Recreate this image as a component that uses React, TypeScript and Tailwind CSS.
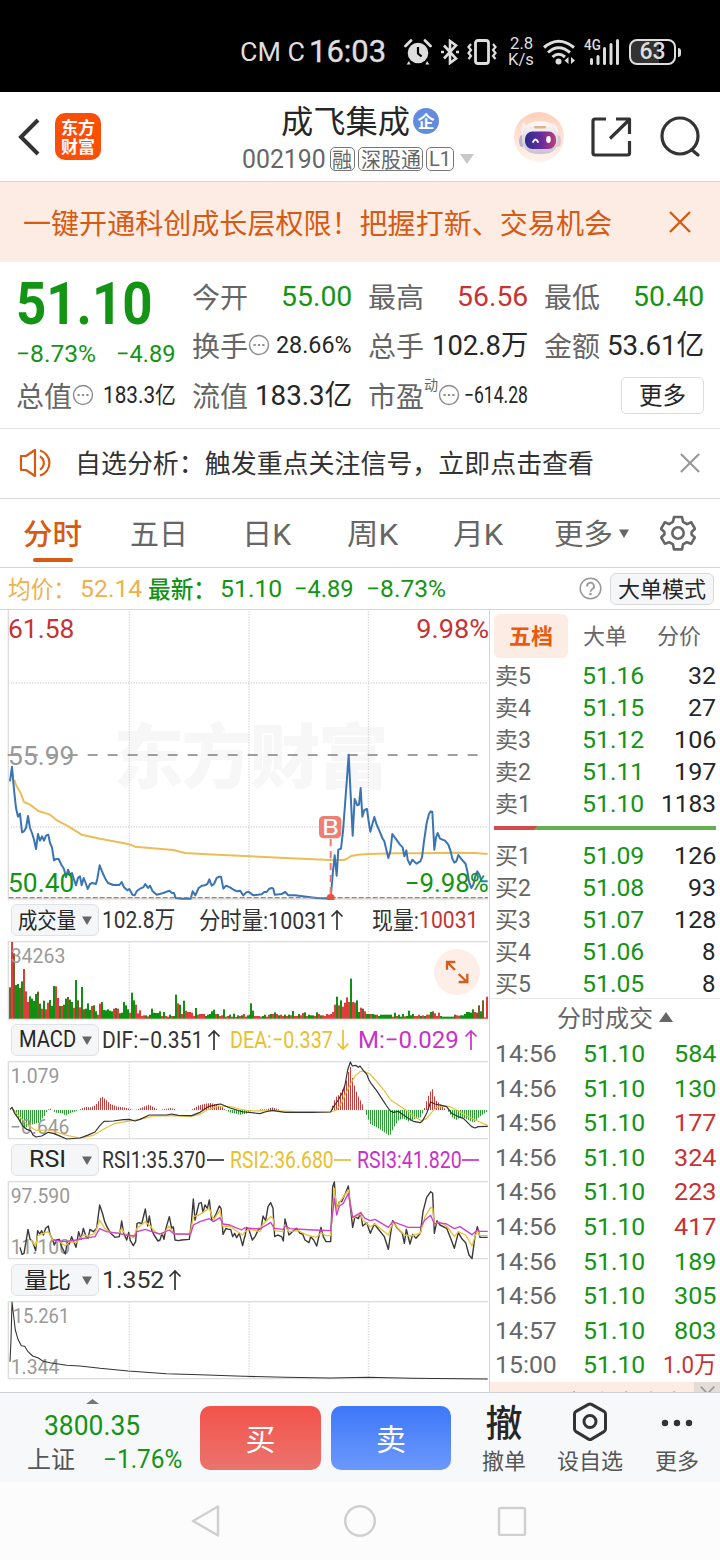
import { useLayoutEffect, useRef, useState, type ReactNode } from "react";

const GREEN = "text-[#149414]";
const RED = "text-[#c83232]";

/** Single-line text condensed or expanded to a fixed advance width; Chinese labels sit slightly lower. */
function Fit({ w, className = "", children }: { w: number; className?: string; children: ReactNode }) {
  const ref = useRef<HTMLSpanElement>(null);
  const [scale, setScale] = useState(1);
  useLayoutEffect(() => {
    if (ref.current) setScale(w / ref.current.offsetWidth);
  }, [w]);
  const dy = /^[\u4e00-\u9fff]/.test(String(children)) ? "0.055em" : "0";
  return (
    <span className={`block shrink-0 ${className}`} style={{ width: w }}>
      <span
        ref={ref}
        className="inline-block origin-left whitespace-nowrap align-top"
        style={{ transform: `translateY(${dy}) scaleX(${scale})` }}
      >
        {children}
      </span>
    </span>
  );
}

/* ---------- chart helpers: coordinates are thirds of a pixel ---------- */

const HALF = 735;

function points(morning: string, afternoon: string) {
  const parse = (s: string, dx: number) =>
    s
      .trim()
      .split(/\s+/)
      .map((p) => {
        const [x, y] = p.split(",").map(Number);
        return [x + dx, y] as [number, number];
      });
  return [...parse(morning, 0), ...parse(afternoon, HALF)];
}

function Line({ a, b, color, width = 3.6 }: { a: string; b: string; color: string; width?: number }) {
  return (
    <polyline
      points={points(a, b).map((p) => p.join(",")).join(" ")}
      fill="none"
      stroke={color}
      strokeWidth={width}
      strokeLinejoin="round"
    />
  );
}

function Frame({ top, bottom }: { top: number; bottom: number }) {
  return (
    <g fill="none">
      {[388, 747, 1105].map((x) => (
        <path key={x} d={`M${x} ${top}V${bottom}`} stroke="#cfcfcf" strokeWidth="3" strokeDasharray="4 4" />
      ))}
      <path d={`M1464 ${top}H25V${bottom}H1464`} stroke="#dcdcdc" strokeWidth="4" />
    </g>
  );
}

function ChartLabel({ x, y, w, size = 66, fill = "#999", children }: { x: number; y: number; w: number; size?: number; fill?: string; children: string }) {
  return (
    <text x={x} y={y} textLength={w} lengthAdjust="spacingAndGlyphs" fontSize={size} fill={fill}>
      {children}
    </text>
  );
}

const PRICE_A =
  "30,520 36,476 42,545 48,600 54,626 60,617 66,673 72,670 78,660 84,624 90,660 96,675 102,695 108,723 114,678 120,698 126,685 132,698 138,683 145,680 150,705 156,718 162,757 168,753 176,753 184,770 192,783 198,808 204,785 210,800 216,795 222,815 228,832 234,810 240,805 245,832 251,810 257,825 263,843 270,828 276,825 288,828 292,812 299,772 308,795 316,812 324,825 340,831 358,831 365,822 372,838 382,847 388,843 398,861 404,862 410,850 420,842 430,838 436,828 444,840 450,833 458,850 470,860 490,855 508,848 516,855 522,855 527,870 545,872 572,872 578,850 586,862 596,840 606,833 614,832 622,828 628,814 635,833 642,828 650,810 658,806 663,806 670,842 678,833 690,838 702,846 712,850 720,848 730,862 738,854";
const PRICE_B =
  "10,851 25,862 50,859 58,852 65,852 73,842 80,840 85,842 89,860 110,858 121,852 130,862 150,862 185,866 215,870 257,872 263,800 269,742 275,803 280,725 288,722 294,670 300,590 306,510 311,440 317,560 323,683 329,573 337,592 342,590 347,540 352,626 358,606 366,603 371,640 376,671 388,627 395,650 403,668 412,690 418,700 424,725 430,750 436,730 442,678 452,692 465,710 473,718 478,745 484,727 488,755 495,770 502,755 514,767 526,760 531,748 537,700 545,645 552,618 557,610 562,612 568,725 573,688 578,675 585,692 600,698 610,710 617,730 622,752 628,764 634,760 640,741 648,752 662,768 667,790 672,820 679,840 685,830 692,800 697,790 703,800 710,820 728,820";
const AVG_A =
  "42,515 50,535 62,555 72,582 90,590 115,609 150,620 172,638 200,652 245,680 300,692 385,708 405,716 520,726 555,735 620,739 735,744";
const AVG_B = "0,744 120,750 257,756 296,756 305,753 318,744 340,740 370,738 450,736 530,736 620,734 690,735 728,738";

function PriceChart() {
  return (
    <svg className="block" width="489" height="290" viewBox="0 6 1467 870" fontFamily="Roboto, 'Noto Sans CJK SC', sans-serif">
      <text x="340" y="524" textLength="826" fontSize="212" fontWeight="900" fill="#f7f7f7" fontFamily="'Noto Sans CJK SC'">
        东方财富
      </text>
      {[225, 657].map((y) => (
        <path key={y} d={`M24 ${y}H1464`} stroke="#d9d9d9" strokeWidth="4" strokeDasharray="4 4" />
      ))}
      <Frame top={2} bottom={873} />
      <path d="M23 441H1440" stroke="#808080" strokeWidth="5" strokeDasharray="30 30" />
      <Line a={AVG_A} b={AVG_B} color="#edbd55" width={6} />
      <Line a={PRICE_A} b={PRICE_B} color="#3b74b3" width={6} />
      <path d="M26 869H1464" stroke="#b07a68" strokeWidth="4" strokeDasharray="15 6" />
      <path d="M992 693V872" stroke="#ee7a70" strokeWidth="6" strokeDasharray="22 14" />
      <circle cx="992" cy="870" r="12" fill="#e8503f" />
      <rect x="957" y="624" width="67" height="67" rx="14" fill="#ee7f72" />
      <ChartLabel x={966} y={682} w={51} size={68} fill="#fff">B</ChartLabel>
      <ChartLabel x={24} y={90} w={199} size={78} fill="#c83232">61.58</ChartLabel>
      <ChartLabel x={24} y={471} w={199} size={78}>55.99</ChartLabel>
      <ChartLabel x={24} y={852} w={199} size={78} fill="#149414">50.40</ChartLabel>
      <ChartLabel x={1249} y={90} w={218} size={78} fill="#c83232">9.98%</ChartLabel>
      <ChartLabel x={1214} y={852} w={252} size={78} fill="#149414">−9.98%</ChartLabel>
    </svg>
  );
}

const VOL_A =
  "94m 230r 196m 101g 104g 92m 112g 149r 82r 50r 67g 60g 53g 74g 81m 45g 30r 54g 28r 48r 56g 38g 98g 97r 62r 38g 38r 42g 60g 65m 57g 50g 33r 116g 55m 34r 95g 28m 30g 46g 26g 38r 40g 22g 12r 45r 50g 26g 25g 28g 24g 22g 30r 32m 30r 16g 18g 50g 40g 28g 18r 78g 55g 42r 16r 25r 8r 10r 10g 7r 12g 30g 18g 17g 17g 22g 8r 20g 8r 6r 12g 8r 8g 72g 46r 42g 14r 54g 24r 20r 20r 18r 8r 32g 12r 14r 14r 14r 8g 12g 14g 22g 27g 14r 14g 8r 10r 28g 6r 8r 12g 6r 15g 5r 10g 8r 10g 14r 6r 10g 12g";
const VOL_B =
  "46g 24g 8r 8r 8r 6r 8g 12g 6r 12r 14g 14r 19g 14r 10g 12r 8r 12g 8r 12g 10r 23g 8r 8r 14g 10r 17r 19g 8r 12g 10g 10g 8r 19g 14r 10g 10r 8r 14r 12r 14r 20r 42r 66g 40r 55g 36r 48r 64r 50r 120g 50r 48r 55g 20g 33r 30m 22r 14g 14g 14r 14g 12g 12r 8g 12g 12g 12g 12g 12g 12g 6r 18g 8r 12g 6g 14g 7r 8g 24g 10g 14g 8r 8r 12r 8g 10r 8g 12r 12r 20g 22m 16r 8r 18r 8g 6g 6g 6g 6g 6g 6g 12m 10r 9r 10g 10g 14g 20g 20g 18g 28g 20r 18m 40m 22g 55m 4r 66r";
const VOL_COLORS: Record<string, string> = { r: "#e03c3c", g: "#109010", m: "#7d5a2c" };

function VolumeChart() {
  const bars = (s: string, x0: number) =>
    s.split(" ").map((t, i) => {
      const h = parseInt(t);
      return <rect key={x0 + i * 6} x={x0 + i * 6} y={356 - h} width="6" height={h} fill={VOL_COLORS[t.slice(-1)]} />;
    });
  return (
    <svg className="block" width="489" height="80" viewBox="0 120 1467 240" fontFamily="Roboto, sans-serif">
      <Frame top={125} bottom={357} />
      {bars(VOL_A, 27)}
      {bars(VOL_B, 750)}
      <ChartLabel x={32} y={189} w={164} size={62}>34263</ChartLabel>
      <circle cx="1371" cy="216" r="69" fill="#fdefe8" />
      <path d="M1341 209V186H1366M1343 188L1365 210M1376 222L1401 246M1402 221V246H1376" fill="none" stroke="#d06020" strokeWidth="7" />
    </svg>
  );
}

const HIST_A =
  "36,3 42,-8 60,-38 72,-55 90,-45 115,-38 132,-18 141,0 148,5 156,0 165,-8 185,-10 196,-17 210,-9 230,-3 240,3 255,9 270,8 285,14 295,28 303,42 315,32 330,18 350,10 370,8 385,4 400,0 412,2 430,10 445,16 460,8 475,0 500,4 512,6 530,0 560,-1 574,1 595,14 615,19 632,21 650,14 665,9 675,0 690,-8 720,-14 738,-11";
const HIST_B =
  "10,-5 25,0 65,2 80,8 95,3 105,0 255,0 262,15 270,38 280,45 290,60 300,75 308,110 314,135 320,100 330,62 340,38 350,20 357,0 365,-20 375,-42 390,-50 410,-62 433,-78 445,-52 460,-30 475,-25 490,-35 510,-25 525,-22 535,-2 540,18 550,45 560,66 570,30 580,22 590,10 603,0 610,-6 620,-22 632,-30 645,-22 660,-25 685,-38 700,-22 728,-2";

function MacdChart() {
  const env = points(HIST_A, HIST_B);
  const bars = [];
  for (let x = 36; x < 1462; x += 6) {
    const i = Math.max(1, env.findIndex((p) => p[0] >= x));
    const [x0, v0] = env[i - 1];
    const [x1, v1] = env[i];
    const v = v0 + ((v1 - v0) * (x - x0)) / (x1 - x0);
    if (Math.abs(v) > 0.8)
      bars.push(<path key={x} d={`M${x + 1.5} 630V${630 - v}`} stroke={v > 0 ? "#c43c3c" : "#2c9c34"} strokeWidth="3" />);
  }
  return (
    <svg className="block" width="489" height="80" viewBox="0 480 1467 240" fontFamily="Roboto, sans-serif">
      <Frame top={485} bottom={716} />
      <path d="M26 630H1464" stroke="#e3d9d9" strokeWidth="2" strokeDasharray="4 4" />
      {bars}
      <ChartLabel x={32} y={549} w={146} size={62}>1.079</ChartLabel>
      <ChartLabel x={30} y={702} w={178} size={62}>−0.646</ChartLabel>
      <Line
        a="36,626 50,640 70,662 90,680 108,691 150,690 200,706 240,714 280,706 310,688 345,670 400,661 430,656 460,648 520,647 570,650 600,643 625,628 655,618 690,620 720,627 738,631"
        b="15,633 80,632 150,635 255,636 275,630 290,608 300,585 318,550 330,528 345,515 357,513 375,522 400,550 420,575 437,600 460,615 490,635 510,652 530,662 545,655 560,637 575,622 600,618 615,620 640,632 660,645 690,660 728,676"
        color="#e8c040"
      />
      <Line
        a="30,628 36,622 44,640 55,655 68,678 80,688 92,692 100,706 108,711 125,708 145,697 160,700 175,706 200,717 240,714 262,706 285,696 300,676 312,664 340,663 370,659 388,658 405,663 420,658 448,645 500,645 515,642 535,646 575,647 600,637 625,620 650,614 662,612 690,624 730,636"
        b="0,636 45,641 60,636 82,631 100,634 120,637 200,637 257,636 264,622 280,600 293,576 300,555 308,510 316,486 322,498 332,496 340,502 345,498 355,512 365,522 372,540 378,550 395,572 410,595 425,618 436,633 445,637 460,634 475,645 490,655 505,664 525,668 533,662 545,640 557,606 570,612 590,616 605,620 620,640 640,650 655,655 668,668 680,680 690,684 700,680 728,679"
        color="#333"
      />
    </svg>
  );
}

function RsiChart() {
  return (
    <svg className="block" width="489" height="80" viewBox="0 120 1467 240" fontFamily="Roboto, sans-serif">
      <Frame top={125} bottom={356} />
      <ChartLabel x={32} y={189} w={178} size={62}>97.590</ChartLabel>
      <ChartLabel x={32} y={342} w={178} size={62}>11.100</ChartLabel>
      <Line
        width={4.2}
        a="60,322 66,343 72,340 78,305 84,268 90,297 98,305 107,332 113,272 119,282 125,272 130,285 137,265 145,258 150,283 157,297 163,315 170,300 178,298 184,318 196,342 202,305 208,312 215,290 228,322 236,275 243,298 250,265 258,290 264,295 270,268 280,275 290,265 299,195 308,222 314,245 322,262 332,280 345,292 358,290 365,243 371,280 380,300 386,277 391,302 400,317 407,305 411,250 418,248 425,252 436,207 443,258 448,228 455,270 462,285 474,303 480,300 486,280 492,298 497,268 508,230 515,265 520,260 525,300 535,302 545,300 568,298 574,250 580,177 585,240 597,190 604,188 609,218 615,195 622,205 628,180 635,240 640,238 648,222 658,198 663,205 669,283 678,265 685,268 692,268 698,290 704,280 710,293 718,280 728,317 734,290"
        b="0,290 5,262 12,270 22,300 30,290 42,265 48,268 54,228 62,242 69,200 77,188 84,205 89,290 98,285 110,290 115,303 120,237 132,285 142,275 155,265 165,280 173,282 180,300 192,308 197,290 206,300 215,318 228,262 235,290 243,305 257,305 263,140 268,126 273,195 278,200 283,185 290,185 302,158 310,138 316,200 323,262 330,230 340,236 347,218 353,258 365,248 376,280 388,252 402,270 418,290 430,328 437,280 443,242 455,262 472,280 478,310 484,268 495,312 503,283 513,295 526,280 534,215 545,172 557,155 563,160 568,280 576,242 585,255 605,265 617,295 628,325 640,278 652,298 662,308 672,345 681,356 690,290 697,260 705,292 728,292"
        color="#3a3a3a"
      />
      <Line
        width={4}
        a="92,300 107,318 113,288 125,282 145,275 158,300 178,305 196,318 208,305 228,308 250,285 265,288 285,280 299,240 314,265 332,278 358,280 365,265 375,282 400,293 411,265 436,245 448,255 470,280 490,282 508,258 522,282 570,284 580,230 597,225 612,215 628,205 640,240 660,212 669,260 690,258 705,270 728,285 734,276"
        b="0,275 15,268 45,275 52,255 77,230 84,235 90,272 113,275 120,255 130,275 160,272 185,285 215,292 228,278 243,287 257,287 268,145 275,208 283,187 310,150 323,235 347,222 353,240 376,260 390,252 430,285 443,247 478,285 495,288 526,280 540,230 557,202 563,205 568,255 580,245 605,258 628,290 640,275 662,285 681,318 690,290 697,272 705,286 728,287"
        color="#ecc238"
      />
      <Line
        width={4}
        a="160,300 196,305 228,300 240,297 285,290 299,266 320,275 358,280 375,285 405,288 411,275 436,268 455,275 480,282 508,270 522,282 572,282 580,255 600,245 628,236 640,245 660,233 669,252 690,255 705,262 725,270 734,263"
        b="0,264 45,267 77,247 88,265 115,268 121,258 135,266 205,270 257,272 268,175 275,225 283,198 295,190 310,160 323,232 347,218 360,235 376,242 390,238 430,262 443,245 490,262 526,262 540,240 557,226 568,252 580,248 605,252 628,266 645,260 681,284 697,270 705,274 728,274"
        color="#cf3fcf"
      />
    </svg>
  );
}

function RatioChart() {
  return (
    <svg className="block" width="489" height="80" viewBox="0 480 1467 240" fontFamily="Roboto, sans-serif">
      <Frame top={485} bottom={716} />
      <ChartLabel x={38} y={549} w={170} size={62}>15.261</ChartLabel>
      <ChartLabel x={32} y={702} w={146} size={62}>1.344</ChartLabel>
      <Line
        a="30,665 33,600 36,486 40,520 46,570 54,598 64,617 74,619 84,635 98,648 115,654 130,664 150,668 200,676 240,678 300,685 385,693 500,701 600,704 730,709"
        b="0,709 120,712 257,714 370,712 500,715 728,717"
        color="#333"
        width={3.2}
      />
    </svg>
  );
}

/* ---------- icons ---------- */

function StatusIcons() {
  return (
    <>
      <svg className="ml-[18px]" width="28" height="28" viewBox="0 0 28 28" fill="#dedede">
        <circle cx="14" cy="15" r="10.3" />
        <path d="M5 23l-2.4 3.4 4 .2zM23 23l2.4 3.4-4 .2z" />
        <path d="M1.5 8L7 2.5M26.5 8L21 2.5" stroke="#dedede" strokeWidth="2.8" strokeLinecap="round" />
        <path d="M14 9v6.5l3.6 3" stroke="#000" strokeWidth="2.2" fill="none" />
      </svg>
      <svg className="ml-[9px]" width="18" height="26" viewBox="0 0 18 26" fill="none" stroke="#dedede" strokeWidth="2.6">
        <path d="M3 6.500l12 13-6 4.500V2l6 4.500L3 19.500" />
        <path d="M0 13h3M15 13h3" />
      </svg>
      <svg className="ml-[8px]" width="30" height="26" viewBox="0 0 30 26" fill="none" stroke="#dedede" strokeWidth="2.2">
        <rect x="8.500" y="1.500" width="13" height="23" rx="2.500" strokeWidth="2.800" />
        <path d="M4 5L1.500 8 4 11 1.500 14 4 17 1.500 20M26 5l2.500 3L26 11l2.500 3L26 17l2.500 3" />
      </svg>
      <div className="ml-[11px] flex w-[26px] flex-col items-center text-[#dedede]">
        <Fit w={23} className="text-[16px] leading-[16px]">2.8</Fit>
        <Fit w={26} className="text-[16px] leading-[16px]">K/s</Fit>
      </div>
      <svg className="ml-[9px]" width="33" height="26" viewBox="0 0 33 26" fill="none" stroke="#dedede" strokeWidth="3">
        <path d="M1 8.500Q15.500-4 31 8.500M5 13.500Q15.500 4 27 13.500M9.500 18Q15.500 12.500 22 18" />
        <circle cx="15.500" cy="22.500" r="3" fill="#dedede" stroke="none" />
        <path d="M25.500 18v7l-4-3.500zM28 18v7l4-3.500z" fill="#dedede" stroke="none" />
      </svg>
      <div className="relative ml-[8px] h-[26px] w-[36px]">
        <svg width="36" height="26" viewBox="0 0 36 26" fill="#dedede">
          <rect x="6" y="19" width="3" height="7" rx="1.500" />
          <rect x="12.500" y="16" width="3" height="10" rx="1.500" />
          <rect x="19" y="8" width="3" height="18" rx="1.500" />
          <rect x="25.500" y="4" width="3" height="22" rx="1.500" />
          <rect x="32" y="0" width="3" height="26" rx="1.500" />
        </svg>
        <div className="absolute left-0 top-0">
          <Fit w={17} className="text-[15px] font-medium leading-[13px] text-[#dedede]">4G</Fit>
        </div>
      </div>
      <div className="ml-[9px] flex h-[26px] w-[47px] items-center justify-center rounded-[8px] border-2 border-[#dedede] bg-[linear-gradient(90deg,#333_64%,#000_64%)]">
        <Fit w={26} className="text-[23px] font-medium leading-[22px] text-[#dedede]">63</Fit>
      </div>
      <div className="ml-[2px] h-[9px] w-[3px] rounded-r bg-[#dedede]" />
    </>
  );
}

function Robot() {
  return (
    <svg width="50" height="50" viewBox="0 0 50 50">
      <defs>
        <linearGradient id="halo" x1="0" y1="0" x2="0" y2="1">
          <stop offset="0" stopColor="#fdd0bb" />
          <stop offset="1" stopColor="#fff3ec" />
        </linearGradient>
        <linearGradient id="visor" x1="0" y1="0" x2="1" y2="0">
          <stop offset="0" stopColor="#2b2e90" />
          <stop offset=".55" stopColor="#6a2c9c" />
          <stop offset="1" stopColor="#c04078" />
        </linearGradient>
        <linearGradient id="shell" x1="0" y1="0" x2="0" y2="1">
          <stop offset="0" stopColor="#fffaf7" />
          <stop offset="1" stopColor="#c9c3d6" />
        </linearGradient>
      </defs>
      <circle cx="25" cy="25" r="25" fill="url(#halo)" />
      <path d="M9 10q-3 6-1 13l7-7zM40 11q6 5 3 13l-7-7z" fill="#f6f0ef" />
      <ellipse cx="8" cy="29" rx="3" ry="6" fill="#b9b3c4" />
      <ellipse cx="44" cy="29" rx="3" ry="6" fill="#d9c8d0" />
      <path d="M8 27C8 14 15 9 26 9s18 5 18 18-8 15-18 15S8 39 8 27z" fill="url(#shell)" />
      <rect x="11" y="19.500" width="31" height="17.500" rx="7.500" fill="url(#visor)" />
      <path d="M19 30q2.500-5 5 0" fill="none" stroke="#fff" strokeWidth="1.800" strokeLinecap="round" />
      <ellipse cx="34.500" cy="27.500" rx="2.300" ry="3.400" fill="#fff" />
      <rect x="20" y="14" width="12" height="2.600" rx="1.300" fill="#d9b48c" />
    </svg>
  );
}

function Dots() {
  return (
    <svg className="-mt-[2px] shrink-0" width="22" height="22" viewBox="0 0 22 22" fill="none" stroke="#8c8c8c" strokeWidth="1.400">
      <circle cx="11" cy="11" r="9.500" />
      <path d="M5.500 11h2.200M9.900 11h2.200M14.300 11h2.200" strokeWidth="2" />
    </svg>
  );
}

function Cross({ className }: { className: string }) {
  return (
    <svg className={className} width="22" height="22" viewBox="0 0 22 22" fill="none" strokeWidth="2.400">
      <path d="M1 1l20 20M21 1L1 21" />
    </svg>
  );
}

function Down({ className = "" }: { className?: string }) {
  return (
    <svg className={`shrink-0 ${className}`} width="10" height="9" viewBox="0 0 10 9" fill="#666">
      <path d="M0 .5h10L5 9z" />
    </svg>
  );
}

/* ---------- blocks ---------- */

function Badge({ w, box, children }: { w: number; box: string; children: string }) {
  return (
    <div className={`mt-[2px] flex h-[24px] items-center justify-center rounded-[5px] border border-[#777] ${box}`}>
      <Fit w={w} className="text-[21px] leading-[20px] text-[#666]">{children}</Fit>
    </div>
  );
}

function Quote({ label, value, w, color = "text-[#262626]", dots = false, sup, small = false }: { label: string; value: string; w: number; color?: string; dots?: boolean; sup?: string; small?: boolean }) {
  return (
    <div className="flex h-[49.5px] items-center">
      <Fit w={56} className="text-[28px] leading-[40px] text-[#666]">{label}</Fit>
      {sup && <Fit w={14} className="-mt-[24px] text-[14px] leading-[16px] text-[#666]">{sup}</Fit>}
      {dots && <Dots />}
      <Fit w={w} className={`ml-auto ${small ? "text-[23px]" : "text-[28px]"} leading-[40px] ${color}`}>{value}</Fit>
    </div>
  );
}

function Pill({ w, cjk = false, children }: { w: number; cjk?: boolean; children: string }) {
  return (
    <div className="ml-[11px] flex h-[32px] w-[88px] shrink-0 items-center rounded-[6px] border border-[#dfe2e6] bg-[#f5f6f8] pr-[6px]">
      <div className="flex flex-1 justify-center">
        <Fit w={w} className={`${cjk ? "text-[22px]" : "text-[23px]"} leading-[30px] text-[#262626]`}>{children}</Fit>
      </div>
      <Down />
    </div>
  );
}

function Arrow({ kind, className }: { kind: "up" | "down" | "flat"; className: string }) {
  const d = kind === "up" ? "M7 21V2M1.500 7.500L7 2l5.500 5.500" : kind === "down" ? "M7 1v19M1.500 14.500L7 20l5.500-5.500" : "M0 11h17";
  const w = kind === "flat" ? 17 : 14;
  return (
    <svg className={`shrink-0 ${className}`} width={w} height="22" viewBox={`0 0 ${w} 22`} fill="none" stroke="currentColor" strokeWidth="1.700">
      <path d={d} />
    </svg>
  );
}

function Level({ name, price, vol, w }: { name: string; price: string; vol: string; w: number }) {
  return (
    <div className="flex h-[32px] shrink-0 items-center pl-[5px] pr-[4px] text-[24px] leading-[32px]">
      <Fit w={36} className="text-[23px] text-[#666]">{name}</Fit>
      <Fit w={62} className={`ml-[51px] ${GREEN}`}>{price}</Fit>
      <Fit w={w} className="ml-auto text-[#262626]">{vol}</Fit>
    </div>
  );
}

const SELLS: [string, string, string, number][] = [
  ["卖5", "51.16", "32", 28],
  ["卖4", "51.15", "27", 28],
  ["卖3", "51.12", "106", 42],
  ["卖2", "51.11", "197", 42],
  ["卖1", "51.10", "1183", 55],
];
const BUYS: [string, string, string, number][] = [
  ["买1", "51.09", "126", 42],
  ["买2", "51.08", "93", 28],
  ["买3", "51.07", "128", 42],
  ["买4", "51.06", "8", 14],
  ["买5", "51.05", "8", 14],
];
const TICKS: [string, string, boolean][] = [
  ["14:56", "584", false],
  ["14:56", "130", false],
  ["14:56", "177", true],
  ["14:56", "324", true],
  ["14:56", "223", true],
  ["14:56", "417", true],
  ["14:56", "189", false],
  ["14:56", "305", false],
  ["14:57", "803", false],
  ["15:00", "1.0万", true],
];

export default function App() {
  return (
    <div className="flex h-[1560px] w-[720px] flex-col overflow-hidden bg-white font-[Roboto,'Noto_Sans_CJK_SC',sans-serif]">
      <div className="flex h-[92px] shrink-0 items-center bg-black pl-[240px] pt-[12px]">
        <Fit w={65} className="text-[26px] leading-[36px] text-[#dedede]">CM C</Fit>
        <Fit w={77} className="ml-[4px] text-[31px] leading-[36px] text-[#dedede] [-webkit-text-stroke:0.4px_#dedede]">16:03</Fit>
        <StatusIcons />
      </div>

      <header className="flex h-[90px] shrink-0 items-center border-b border-[#d6d6d6]">
        <svg className="ml-[17px] shrink-0" width="24" height="38" viewBox="0 0 24 38" fill="none" stroke="#333" strokeWidth="4">
          <path d="M21 2L4 19l17 17" />
        </svg>
        <div className="ml-[14px] flex h-[47px] w-[46px] shrink-0 flex-col items-center justify-center rounded-[10px] bg-[#fb4f08] text-[17px] font-bold leading-[19px] text-white">
          <Fit w={34}>东方</Fit>
          <Fit w={34}>财富</Fit>
        </div>
        <div className="ml-[141px] flex w-[232px] shrink-0 flex-col">
          <div className="flex h-[42px] items-center pl-[39px]">
            <Fit w={129} className="text-[32px] leading-[42px] text-[#262626]">成飞集成</Fit>
            <div className="ml-[3px] mt-[2px] flex size-[26px] items-center justify-center rounded-full bg-[#628be0]">
              <Fit w={17} className="text-[17px] font-bold leading-[24px] text-white">企</Fit>
            </div>
          </div>
          <div className="flex h-[34px] items-center gap-[2.5px]">
            <Fit w={84} className="pt-[2px] text-[26px] leading-[34px] text-[#666]">002190</Fit>
            <Badge w={20} box="ml-[1px] w-[26px]">融</Badge>
            <Badge w={60} box="w-[66px]">深股通</Badge>
            <Badge w={22} box="w-[28px]">L1</Badge>
            <svg className="ml-[4px] mt-[2px]" width="14" height="10" viewBox="0 0 14 10" fill="#c8c8c8">
              <path d="M0 0h14L7 10z" />
            </svg>
          </div>
        </div>
        <div className="ml-[40px] shrink-0">
          <Robot />
        </div>
        <svg className="ml-[27px] shrink-0" width="42" height="40" viewBox="0 0 42 40" fill="none" stroke="#333" strokeWidth="3.200" strokeLinejoin="round">
          <path d="M15 2H4a2 2 0 0 0-2 2v32a2 2 0 0 0 2 2h32.500a2 2 0 0 0 2-2V24M25 2h13.500v15M38 3L19 21.500" />
        </svg>
        <svg className="ml-[27px] shrink-0" width="42" height="42" viewBox="0 0 42 42" fill="none" stroke="#333" strokeWidth="3.200" strokeLinecap="round">
          <circle cx="20" cy="20" r="18" />
          <path d="M32 34l6 5" />
        </svg>
      </header>

      <div className="flex h-[80px] shrink-0 items-center bg-[#fdece3] pl-[23px] pr-[29px]">
        <Fit w={589} className="pt-[1px] text-[28px] leading-[40px] text-[#d65a14]">一键开通科创成长层权限！把握打新、交易机会</Fit>
        <Cross className="ml-auto stroke-[#d65a14]" />
      </div>

      <section className="grid h-[167px] shrink-0 grid-cols-[160px_160px_160px_160px] gap-x-[16px] border-b border-[#e6e6e6] pl-[16px] pt-[10px]">
        <div>
          <div className="flex h-[64px] items-center">
            <Fit w={137} className={`text-[59px] font-bold leading-[64px] ${GREEN}`}>51.10</Fit>
          </div>
          <div className={`flex h-[35px] items-center justify-between pt-[2px] text-[24px] leading-[33px] ${GREEN}`}>
            <Fit w={80}>−8.73%</Fit>
            <Fit w={60}>−4.89</Fit>
          </div>
          <Quote label="总值" dots small value="183.3亿" w={73} />
        </div>
        <div>
          <Quote label="今开" value="55.00" w={71} color={GREEN} />
          <Quote label="换手" dots small value="28.66%" w={76} />
          <Quote label="流值" value="183.3亿" w={97} />
        </div>
        <div>
          <Quote label="最高" value="56.56" w={71} color={RED} />
          <Quote label="总手" value="102.8万" w={96} />
          <Quote label="市盈" sup="动" dots small value="−614.28" w={64} />
        </div>
        <div>
          <Quote label="最低" value="50.40" w={71} color={GREEN} />
          <Quote label="金额" value="53.61亿" w={97} />
          <div className="flex h-[49.5px] items-center justify-end">
            <div className="flex h-[37px] w-[83px] items-center justify-center rounded-[5px] border border-[#dcdcdc]">
              <Fit w={47} className="text-[24px] leading-[33px] text-[#262626]">更多</Fit>
            </div>
          </div>
        </div>
      </section>

      <div className="flex h-[70px] shrink-0 items-center border-b border-[#d6d6d6] pb-[2px] pl-[19px] pr-[20px]">
        <svg width="36" height="30" viewBox="0 0 36 30" fill="none" stroke="#d65a14" strokeWidth="2.200" strokeLinejoin="round">
          <path d="M2 8h5l9-6v26l-9-6H2z" />
          <path d="M21 8.500a7.500 7.500 0 0 1 0 13M21 2.500a13 13 0 0 1 0 25" />
        </svg>
        <Fit w={519} className="ml-[20px] text-[26px] leading-[40px] text-[#333]">自选分析：触发重点关注信号，立即点击查看</Fit>
        <Cross className="ml-auto size-[20px] stroke-[#999]" />
      </div>

      <nav className="flex h-[69px] shrink-0 items-center border-b border-[#d6d6d6] text-[29px] leading-[60px] text-[#666]">
        <div className="relative ml-[23px]">
          <Fit w={59} className="font-medium text-[#d65a14]">分时</Fit>
          <div className="absolute bottom-[1px] left-[10px] h-[4px] w-[40px] rounded-full bg-[#d65a14]" />
        </div>
        <Fit w={58} className="ml-[48px]">五日</Fit>
        <Fit w={49} className="ml-[54px]">日K</Fit>
        <Fit w={51} className="ml-[56px]">周K</Fit>
        <Fit w={50} className="ml-[55px]">月K</Fit>
        <Fit w={59} className="ml-[51px]">更多</Fit>
        <Down className="ml-[6px]" />
        <svg className="ml-[31px]" width="36" height="36" viewBox="0 0 36 36" fill="none" stroke="#666" strokeWidth="2.600" strokeLinejoin="round">
          <path d="M14 2h8l1 4.800 4 2.300 4.300-1.800L35 13.800 31.600 17v2.500l3.200 3-3.600 6.200-4.400-1.500-3.800 2.200-1 5h-8l-1-5-3.800-2.200-4.400 1.500-3.600-6.200 3.200-3V17L1 13.800l3.700-6.500L9 9.100l4-2.300z" />
          <circle cx="18" cy="18" r="5.700" />
        </svg>
      </nav>

      <div className={`flex h-[42px] shrink-0 items-center border-b border-[#d6d6d6] pl-[8px] text-[24px] leading-[40px] ${GREEN}`}>
        <Fit w={68} className="text-[#edb24e]">均价：</Fit>
        <Fit w={62} className="ml-[4px] text-[#edb24e]">52.14</Fit>
        <Fit w={68} className="ml-[6px] font-medium">最新：</Fit>
        <Fit w={62} className="ml-[4px]">51.10</Fit>
        <Fit w={60} className="ml-[12px]">−4.89</Fit>
        <Fit w={80} className="ml-[12px]">−8.73%</Fit>
        <svg className="ml-[133px] shrink-0" width="23" height="23" viewBox="0 0 23 23" fill="none" stroke="#999" strokeWidth="1.500">
          <circle cx="11.500" cy="11.500" r="10.300" />
          <path d="M8 9.500a3.500 3.500 0 1 1 5.200 2.800c-1.200.7-1.700 1.200-1.700 2.500" strokeWidth="1.800" />
          <circle cx="11.500" cy="17" r=".6" />
        </svg>
        <div className="ml-[8px] flex h-[32px] w-[104px] items-center justify-center rounded-[6px] border border-[#d8dadd] bg-[#f5f6f8]">
          <Fit w={88} className="text-[22px] leading-[30px] text-[#262626]">大单模式</Fit>
        </div>
      </div>

      <main className="flex h-[782px] shrink-0 overflow-hidden">
        <div className="w-[490px] shrink-0 border-r border-[#d0d5d8]">
          <PriceChart />
          <div className="flex h-[40px] items-center text-[24px] leading-[40px] text-[#333]">
            <Pill w={58} cjk>成交量</Pill>
            <Fit w={73} className="ml-[3px]">102.8万</Fit>
            <Fit w={129} className="ml-[24px]">分时量:10031</Fit>
            <Arrow kind="up" className="ml-[2px]" />
            <Fit w={47} className="ml-[28px]">现量:</Fit>
            <Fit w={59} className={RED}>10031</Fit>
          </div>
          <VolumeChart />
          <div className="flex h-[40px] items-center text-[24px] leading-[40px] text-[#333]">
            <Pill w={57}>MACD</Pill>
            <Fit w={101} className="ml-[3px]">DIF:−0.351</Fit>
            <Arrow kind="up" className="ml-[4px]" />
            <Fit w={103} className="ml-[9px] text-[#e8c030]">DEA:−0.337</Fit>
            <Arrow kind="down" className="ml-[3px] text-[#e8c030]" />
            <Fit w={101} className="ml-[8px] text-[#c832c8]">M:−0.029</Fit>
            <Arrow kind="up" className="ml-[5px] text-[#c832c8]" />
          </div>
          <MacdChart />
          <div className="flex h-[40px] items-center text-[24px] leading-[40px] text-[#333]">
            <Pill w={37}>RSI</Pill>
            <Fit w={104} className="ml-[3px]">RSI1:35.370</Fit>
            <Arrow kind="flat" className="ml-[1px]" />
            <Fit w={104} className="ml-[6px] text-[#e8c030]">RSI2:36.680</Fit>
            <Arrow kind="flat" className="text-[#e8c030]" />
            <Fit w={105} className="ml-[6px] text-[#c832c8]">RSI3:41.820</Fit>
            <Arrow kind="flat" className="text-[#c832c8]" />
          </div>
          <RsiChart />
          <div className="flex h-[40px] items-center text-[24px] leading-[40px] text-[#333]">
            <Pill w={47} cjk>量比</Pill>
            <Fit w={62} className="ml-[3px]">1.352</Fit>
            <Arrow kind="up" className="ml-[4px]" />
          </div>
          <RatioChart />
          <div className="flex justify-between px-[9px] pt-[8px] text-[22px] leading-[28px] text-[#999]">
            <Fit w={60}>09:30</Fit>
            <Fit w={60}>15:00</Fit>
          </div>
        </div>

        <div className="flex w-[230px] flex-col">
          <div className="flex h-[48px] shrink-0 items-center pl-[4px] pt-[4px] text-[22px] leading-[44px] text-[#666]">
            <div className="flex h-[44px] w-[74px] items-center justify-center rounded-[6px] bg-[#fdece3]">
              <Fit w={44} className="font-bold text-[#e85a10]">五档</Fit>
            </div>
            <Fit w={44} className="ml-[15px]">大单</Fit>
            <Fit w={44} className="ml-[30px]">分价</Fit>
          </div>
          <div className="mt-[2px]">
            {SELLS.map(([n, p, v, w]) => (
              <Level key={n} name={n} price={p} vol={v} w={w} />
            ))}
          </div>
          <div className="ml-[4px] mt-[6px] h-[4px] w-[222px] shrink-0 bg-[linear-gradient(135deg,#d24c4c_31px,#63b04e_31px)]" />
          <div className="mt-[10px] h-[158px] shrink-0">
            {BUYS.map(([n, p, v, w]) => (
              <Level key={n} name={n} price={p} vol={v} w={w} />
            ))}
          </div>
          <div className="flex h-[39px] shrink-0 items-center border-t border-[#e6e6e6] pb-[1px] pl-[67px]">
            <Fit w={96} className="text-[24px] leading-[38px] text-[#666]">分时成交</Fit>
            <svg className="-mt-[2px] ml-[6px]" width="14" height="10" viewBox="0 0 14 10" fill="#666">
              <path d="M0 10h14L7 0z" />
            </svg>
          </div>
          {TICKS.map(([t, v, red], i) => (
            <div key={i} className="flex h-[34.550px] shrink-0 items-center pl-[5px] pr-[4px] text-[24px] leading-[34px]">
              <Fit w={62} className="text-[#666]">{t}</Fit>
              <Fit w={62} className={`ml-[26px] ${GREEN}`}>51.10</Fit>
              <Fit w={v.length > 3 ? 53 : 42} className={`ml-auto ${red ? RED : GREEN}`}>{v}</Fit>
            </div>
          ))}
          <div className="flex h-[40px] shrink-0 justify-between overflow-hidden bg-[#fdece3] pl-[50px] text-[22px] text-[#d65a14]">
            <Fit w={145} className="pt-[6px] leading-[28px]">深市 主力资金</Fit>
            <div className="flex h-[24px] w-[26px] justify-center bg-[#e6dcd7] pt-[4px]">
              <Cross className="size-[15px] stroke-[#999]" />
            </div>
          </div>
        </div>
      </main>

      <footer className="flex h-[90px] shrink-0 border-t border-[#cdd1d5] bg-[#f6f8fa]">
        <div className="w-[200px] shrink-0">
          <svg className="ml-[86px] mt-[6px] block" width="13" height="5" viewBox="0 0 13 5" fill="#777">
            <path d="M0 5h13L6.500 0z" />
          </svg>
          <Fit w={96} className={`ml-[44px] mt-[5px] h-[33px] text-[27px] leading-[34px] ${GREEN}`}>3800.35</Fit>
          <div className="flex h-[34px] items-center">
            <Fit w={48} className="ml-[27px] text-[24px] leading-[34px] text-[#555]">上证</Fit>
            <Fit w={79} className={`ml-[28px] pt-[1px] text-[25px] leading-[34px] ${GREEN}`}>−1.76%</Fit>
          </div>
        </div>
        <div className="mt-[13px] flex h-[64px] w-[121px] shrink-0 items-center justify-center rounded-[10px] bg-linear-to-b from-[#f2524b] to-[#eb736c]">
          <Fit w={30} className="text-[30px] leading-[60px] text-white">买</Fit>
        </div>
        <div className="ml-[10px] mt-[13px] flex h-[64px] w-[120px] shrink-0 items-center justify-center rounded-[10px] bg-linear-to-b from-[#3d77f8] to-[#6c98fc]">
          <Fit w={30} className="text-[30px] leading-[60px] text-white">卖</Fit>
        </div>
        <div className="ml-[31px] flex w-[44px] flex-col items-center">
          <Fit w={37} className="mt-[8px] text-[37px] font-medium leading-[44px] text-[#262626]">撤</Fit>
          <Fit w={44} className="mt-[1px] text-[22px] leading-[30px] text-[#555]">撤单</Fit>
        </div>
        <div className="ml-[31px] flex w-[66px] flex-col items-center">
          <svg className="mt-[9px]" width="36" height="40" viewBox="0 0 36 40" fill="none" stroke="#333" strokeWidth="3" strokeLinejoin="round">
            <path d="M16.500 2.400a3 3 0 0 1 3 0l12.500 7a3 3 0 0 1 1.500 2.600v15a3 3 0 0 1-1.500 2.600l-12.500 7.500a3 3 0 0 1-3 0L4 29.600A3 3 0 0 1 2.500 27V12A3 3 0 0 1 4 9.400z" />
            <circle cx="18" cy="19.500" r="6" />
          </svg>
          <Fit w={66} className="mt-[4px] text-[22px] leading-[30px] text-[#555]">设自选</Fit>
        </div>
        <div className="ml-[32px] flex w-[44px] flex-col items-center">
          <svg className="mt-[26px]" width="32" height="8" viewBox="0 0 32 8" fill="#333">
            <circle cx="4" cy="4" r="3.200" />
            <circle cx="16" cy="4" r="3.200" />
            <circle cx="28" cy="4" r="3.200" />
          </svg>
          <Fit w={44} className="mt-[19px] text-[22px] leading-[30px] text-[#555]">更多</Fit>
        </div>
      </footer>

      <div className="flex h-[78px] shrink-0 items-center bg-[#fcfcfc] pl-[191px]">
        <svg width="30" height="32" viewBox="0 0 30 32" fill="none" stroke="#d0d0d0" strokeWidth="2.500" strokeLinejoin="round">
          <path d="M27 1.500v29L2 16z" />
        </svg>
        <svg className="ml-[122px]" width="34" height="34" viewBox="0 0 34 34" fill="none" stroke="#d0d0d0" strokeWidth="2.500">
          <circle cx="17" cy="17" r="14.800" />
        </svg>
        <svg className="ml-[120px]" width="30" height="30" viewBox="0 0 30 30" fill="none" stroke="#d0d0d0" strokeWidth="2.500">
          <rect x="2" y="2" width="26" height="27" rx="1.500" />
        </svg>
      </div>
    </div>
  );
}
